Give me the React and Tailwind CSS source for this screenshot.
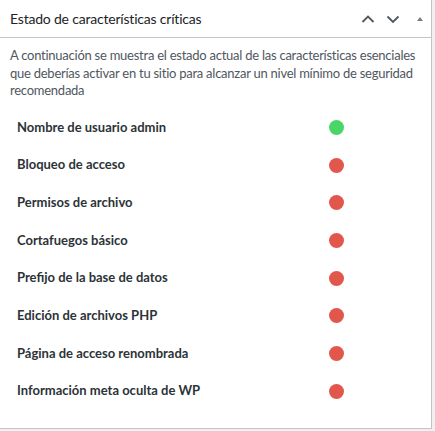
const items = [
  { label: "Nombre de usuario admin", ok: true },
  { label: "Bloqueo de acceso", ok: false },
  { label: "Permisos de archivo", ok: false },
  { label: "Cortafuegos básico", ok: false },
  { label: "Prefijo de la base de datos", ok: false },
  { label: "Edición de archivos PHP", ok: false },
  { label: "Página de acceso renombrada", ok: false },
  { label: "Información meta oculta de WP", ok: false },
]

export default function App() {
  return (
    <div className="w-[435px] h-[431px] bg-[#f0f0f1] overflow-hidden" style={{ fontFamily: 'Lato, "Noto Sans", sans-serif' }}>
      <div className="w-[432px] h-[429px] bg-white border-r border-b border-[#c3c4c7]">
        <div className="h-[38px] flex items-center justify-between pl-[10px] pr-[6px] border-b border-[#c3c4c7]">
          <h2 className="text-[14px] tracking-[-0.2px] text-[#1d2327]">Estado de características críticas</h2>
          <div className="flex items-center gap-[11px] text-[#50575e]">
            <svg width="14" height="14" viewBox="0 0 14 14" fill="none" stroke="currentColor" strokeWidth="1.8">
              <path d="M1.5 10 L7 4.5 L12.5 10" />
            </svg>
            <svg width="14" height="14" viewBox="0 0 14 14" fill="none" stroke="currentColor" strokeWidth="1.8">
              <path d="M1.5 4.5 L7 10 L12.5 4.5" />
            </svg>
            <svg width="10" height="10" viewBox="0 0 10 10" className="ml-[4px] text-[#787c82]">
              <path d="M2 7 L5 3 L8 7 Z" fill="currentColor" />
            </svg>
          </div>
        </div>
        <p className="px-[10px] pt-[9px] text-[13px] tracking-[-0.25px] leading-[17.5px] text-[#50575e]">
          A continuación se muestra el estado actual de las características esenciales que deberías activar en tu sitio para alcanzar un nivel mínimo de seguridad recomendada
        </p>
        <div className="mt-[9px]">
          {items.map((item) => (
            <div key={item.label} className="h-[37.7px] flex items-center pl-[17px]">
              <span className="w-[312px] text-[13px] font-bold text-[#2c3338]">{item.label}</span>
              <span className={"w-[15px] h-[15px] rounded-full " + (item.ok ? "bg-[#4ad667]" : "bg-[#e2574c]")}></span>
            </div>
          ))}
        </div>
      </div>
    </div>
  )
}
